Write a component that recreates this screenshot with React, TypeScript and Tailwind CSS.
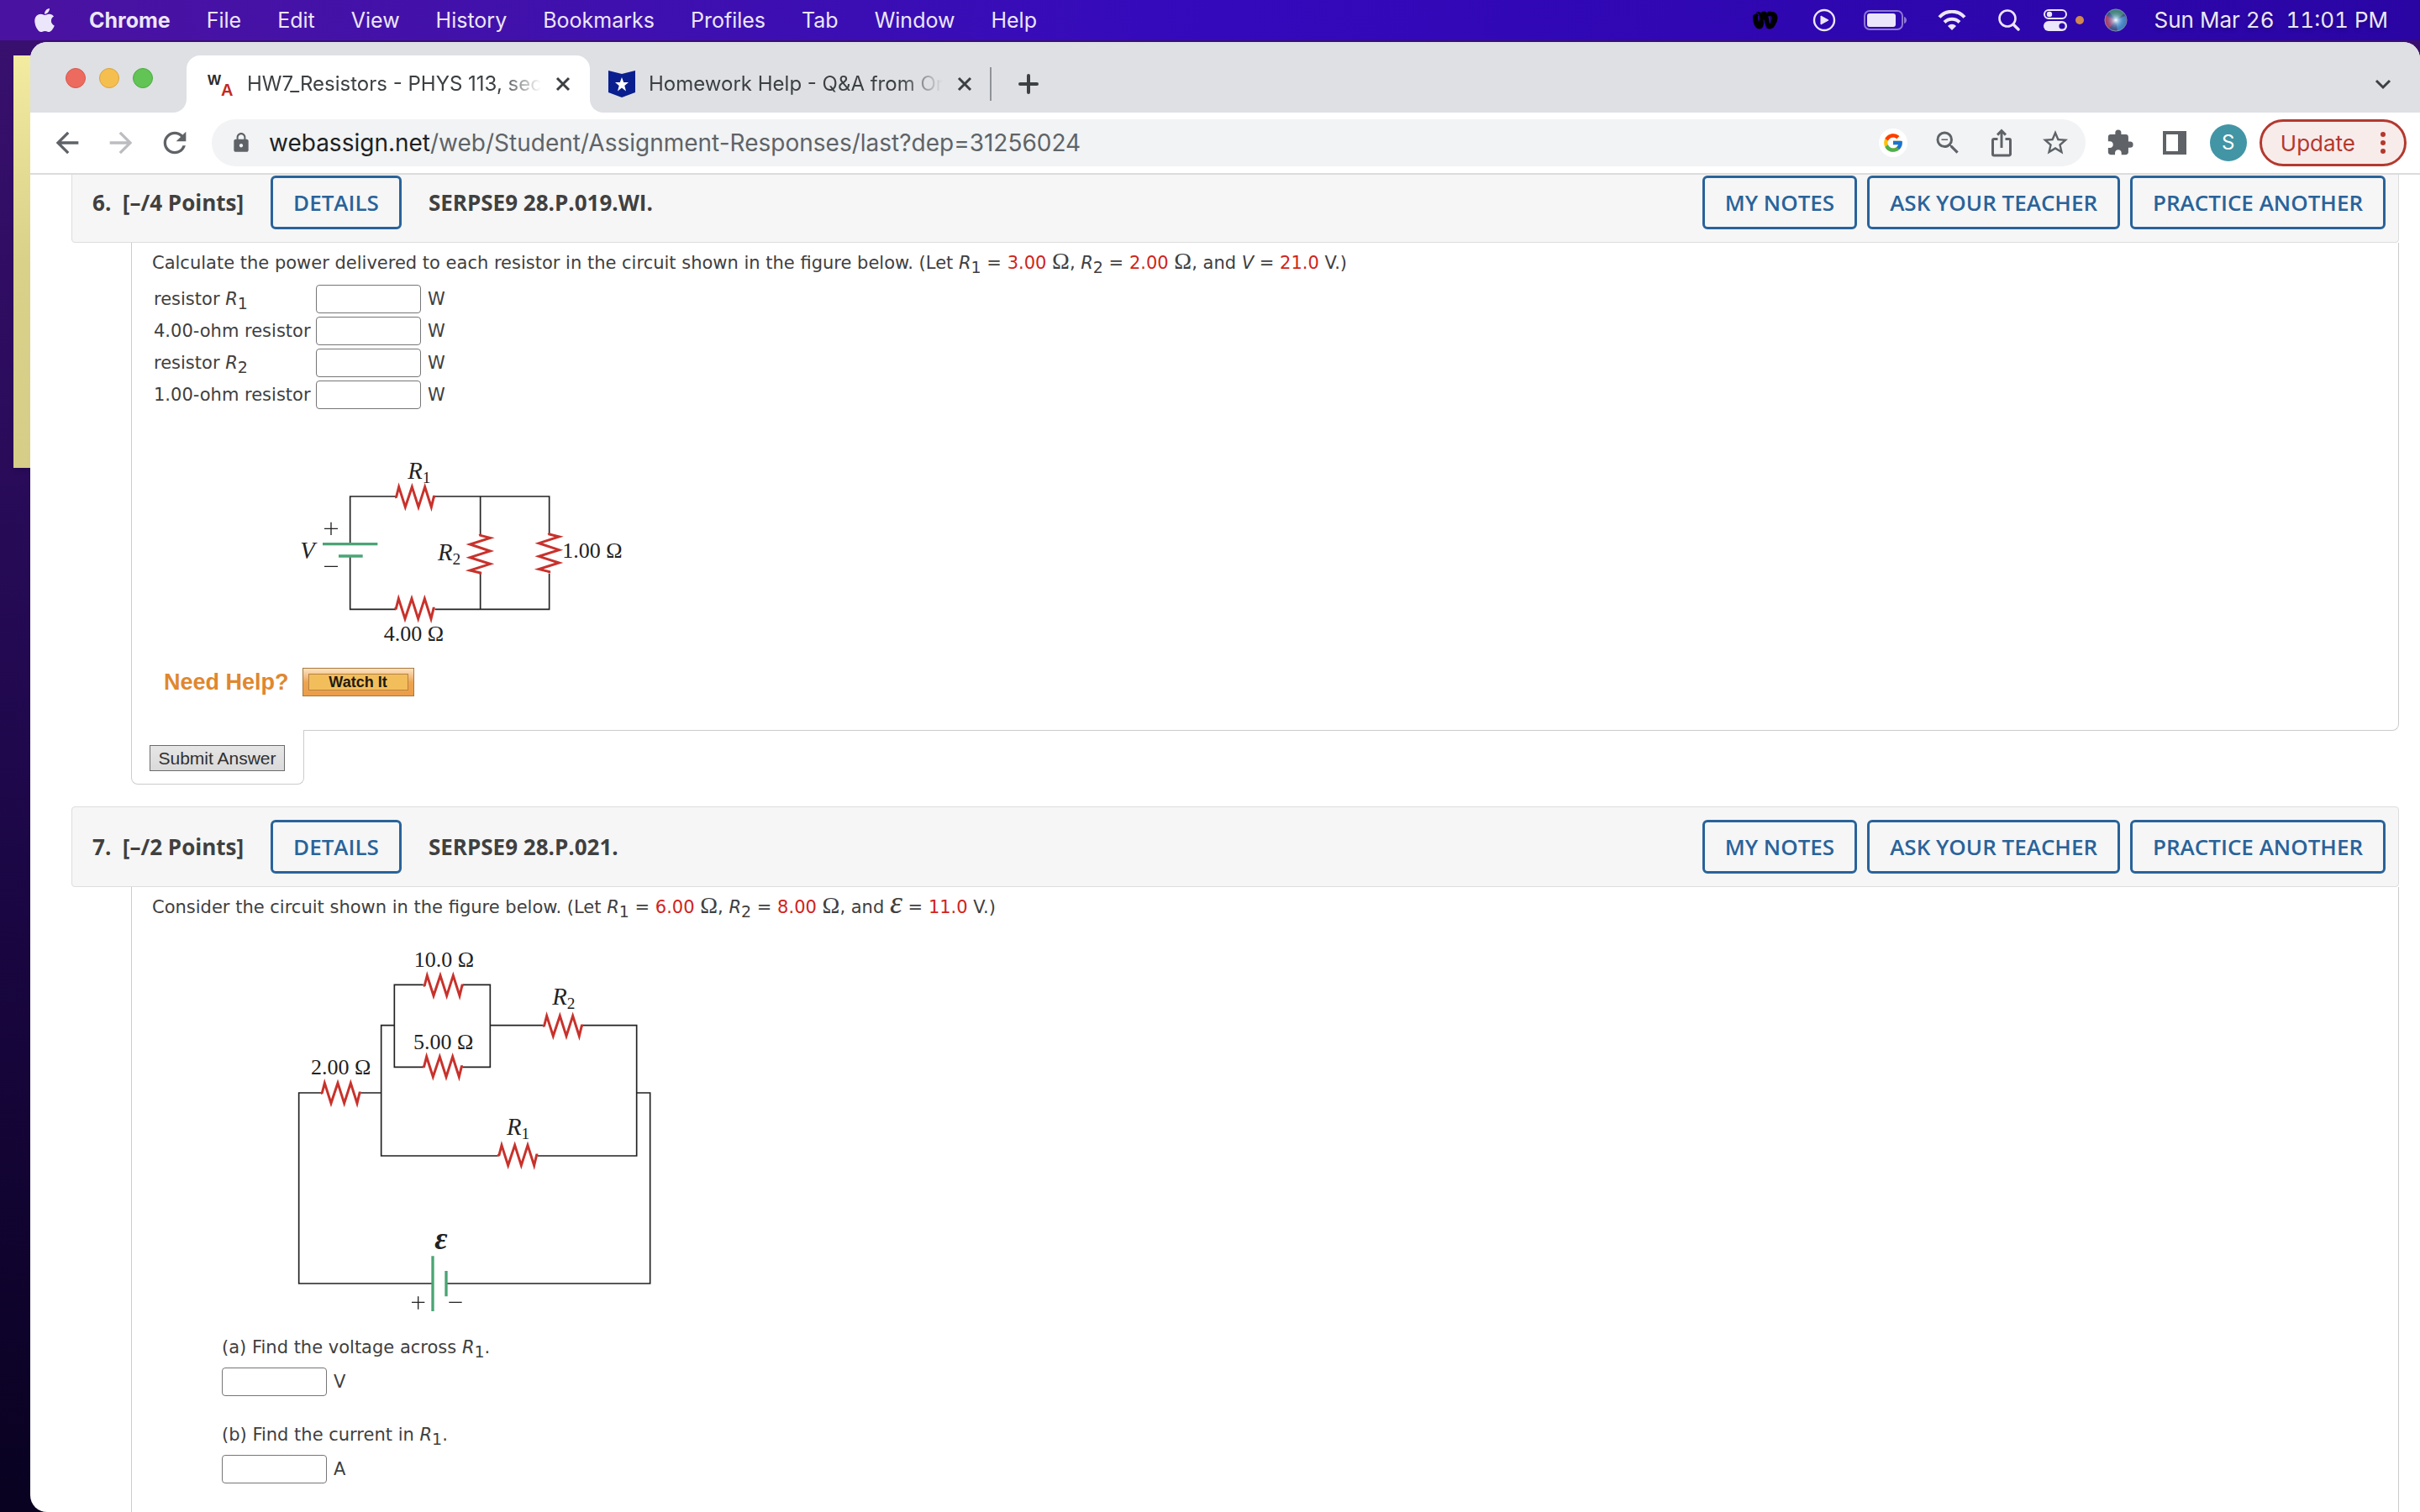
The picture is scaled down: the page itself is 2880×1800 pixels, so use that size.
import type { ReactNode } from "react";
import { FaApple } from "react-icons/fa";
import { FcGoogle } from "react-icons/fc";
import {
  MdArrowBack,
  MdArrowForward,
  MdExtension,
  MdIosShare,
  MdLock,
  MdOutlineZoomOut,
  MdRefresh,
  MdStarBorder,
} from "react-icons/md";

const MENUS = ["File", "Edit", "View", "History", "Bookmarks", "Profiles", "Tab", "Window", "Help"];

const ACTIONS = ["MY NOTES", "ASK YOUR TEACHER", "PRACTICE ANOTHER"];

const WIRE = "#222222";
const RESISTOR = "#c8322c";
const BATTERY = "#4aa574";

function MenuBar() {
  return (
    <header className="flex h-12 shrink-0 items-center bg-linear-to-r from-[#4a12a0] via-[#3409bc] to-[#2a05a4] pr-[38px] pl-[39px] text-[25px] leading-8 text-[#ece6fa] [text-shadow:0_2px_4px_rgba(0,0,0,0.3)]">
      <FaApple className="mr-[39px] h-8 w-7 shrink-0" />
      <nav className="flex items-center gap-[43px]">
        <button className="font-bold">Chrome</button>
        {MENUS.map((menu) => (
          <button key={menu}>{menu}</button>
        ))}
      </nav>
      <div className="ml-auto flex items-center">
        <svg className="mr-10 h-6 w-8" viewBox="0 0 32 24" fill="none" stroke="#000" strokeLinecap="round" strokeLinejoin="round">
          <path d="M4 8C4 14 6 19.500 9 19.500C13 19.500 9 5 14 4.500C18 4 16 19.500 21 19.500C27 19.500 27 5 21 4.500" strokeWidth="6" />
          <path d="M7 4.500C10 4.500 11 8 12 12M25 4.500C29 6 29 12 25 17" strokeWidth="5" />
          <path d="M3 4C7 1 9 6 9 12M14 12C15 16 15 18 17 20M20 8C22 6 24 8 23 11" stroke="#2e07b0" strokeWidth="1" />
        </svg>
        <svg className="mr-[33px] h-7 w-7" viewBox="0 0 28 28">
          <circle cx="14" cy="14" r="12" fill="none" stroke="currentColor" strokeWidth="2.4" />
          <path d="M10 9v10l9-5z" fill="currentColor" stroke="currentColor" strokeLinejoin="round" />
        </svg>
        <svg className="mr-9 h-6 w-[52px]" viewBox="0 0 52 24">
          <rect x="1" y="1" width="45" height="22" rx="6" fill="none" stroke="currentColor" strokeOpacity="0.5" strokeWidth="2" />
          <rect x="4" y="4" width="34" height="16" rx="3" fill="currentColor" />
          <path d="M48 8c4 1 4 7 0 8z" fill="currentColor" fillOpacity="0.5" />
        </svg>
        <svg className="mr-[38px] h-6 w-[34px]" viewBox="0 0 34 24" fill="none" stroke="currentColor" strokeWidth="4">
          <path d="M2 8.500C10 -0.500 24 -0.500 32 8.500" />
          <path d="M8 14.500C13 9.500 21 9.500 26 14.500" />
          <path d="M17 24l-5-5c3-3 7-3 10 0z" fill="currentColor" stroke="none" />
        </svg>
        <svg className="mr-7 h-[26px] w-[26px]" viewBox="0 0 26 26" fill="none" stroke="currentColor" strokeLinecap="round">
          <circle cx="11" cy="11" r="9.500" strokeWidth="2.600" />
          <path d="M18 18l6 6" strokeWidth="3.400" />
        </svg>
        <svg className="mr-[10px] h-[26px] w-7" viewBox="0 0 28 26">
          <rect x="1" y="1" width="26" height="10" rx="5" fill="none" stroke="currentColor" strokeWidth="2" />
          <circle cx="7" cy="6" r="3.200" fill="currentColor" />
          <rect y="14" width="28" height="12" rx="6" fill="currentColor" />
          <circle cx="22" cy="20" r="3.600" fill="#2c06ac" />
        </svg>
        <span className="mr-6 h-[10px] w-[10px] rounded-full bg-[#d08850]" />
        <svg className="mr-8 h-7 w-7" viewBox="0 0 28 28">
          <defs>
            <radialGradient id="siri" cx="0.5" cy="0.5" r="0.5">
              <stop offset="0" stopColor="#fff" />
              <stop offset="0.35" stopColor="#a9cdee" stopOpacity="0.6" />
              <stop offset="1" stopColor="#3a4a88" stopOpacity="0" />
            </radialGradient>
          </defs>
          <circle cx="14" cy="14" r="13.500" fill="#3d4f86" />
          <path d="M14 14L2 8A13 13 0 0 0 6 24z" fill="#b23c64" />
          <path d="M14 14L6 4A13 13 0 0 1 24 6z" fill="#3f8a72" />
          <path d="M14 14L25 9A13 13 0 0 1 16 27z" fill="#3b86c8" />
          <circle cx="14" cy="14" r="13.500" fill="url(#siri)" />
          <circle cx="14" cy="14" r="13" fill="none" stroke="#a8a4c8" strokeOpacity="0.6" />
        </svg>
        <span className="text-[26px] whitespace-pre tabular-nums">Sun Mar 26  11:01 PM</span>
      </div>
    </header>
  );
}

function CloseIcon() {
  return (
    <svg className="h-[18px] w-[18px]" viewBox="0 0 18 18" stroke="#3c4043" strokeWidth="3">
      <path d="M2 2l14 14M16 2L2 16" />
    </svg>
  );
}

function TabStrip() {
  return (
    <div className="flex h-[84px] shrink-0 items-end bg-[#dee0e4] pr-[34px]">
      <div className="mr-10 ml-[42px] flex h-[68px] items-center gap-4 pb-[14px]">
        <button aria-label="Close window" className="h-6 w-6 rounded-full border border-[#d9564b] bg-[#ed6a5f]" />
        <button aria-label="Minimize window" className="h-6 w-6 rounded-full border border-[#dba23c] bg-[#f5bf4f]" />
        <button aria-label="Zoom window" className="h-6 w-6 rounded-full border border-[#4dab40] bg-[#61c454]" />
      </div>
      <div className="relative flex h-[68px] w-[480px] items-center rounded-t-2xl bg-white pl-[26px]">
        <svg className="absolute bottom-0 -left-4 h-4 w-4" viewBox="0 0 16 16">
          <path d="M16 0v16H0C9 16 16 9 16 0z" fill="#fff" />
        </svg>
        <svg className="absolute -right-4 bottom-0 h-4 w-4" viewBox="0 0 16 16">
          <path d="M0 0v16h16C7 16 0 9 0 0z" fill="#fff" />
        </svg>
        <svg className="mr-[18px] h-7 w-7 overflow-visible" viewBox="0 0 28 28" fontFamily="Liberation Sans" fontWeight="bold">
          <text x="-1" y="15" fontSize="17" fill="#2b2b2b">W</text>
          <text x="15" y="28" fontSize="20" fill="#c22a22">A</text>
        </svg>
        <span className="w-[350px] overflow-hidden text-2xl whitespace-nowrap text-[#3c4043] [mask-image:linear-gradient(to_right,black_86%,transparent)]">
          HW7_Resistors - PHYS 113, section
        </span>
        <button aria-label="Close tab" className="ml-[17px]">
          <CloseIcon />
        </button>
      </div>
      <div className="flex h-[68px] w-[476px] items-center pl-[22px]">
        <svg className="mr-4 h-8 w-8" viewBox="0 0 32 32">
          <path d="M0 0l16 4L32 0v26l-16 6L0 26z" fill="#0a1f8f" />
          <path d="M16 8l2.200 6H24l-4.700 4 1.700 6.500-5-4-5 4 1.700-6.500L8 14h5.800z" fill="#fff" />
        </svg>
        <span className="w-[350px] overflow-hidden text-2xl whitespace-nowrap text-[#3c4043] [mask-image:linear-gradient(to_right,black_86%,transparent)]">
          Homework Help - Q&amp;A from Online
        </span>
        <button aria-label="Close tab" className="ml-[17px]">
          <CloseIcon />
        </button>
      </div>
      <div className="flex h-[68px] items-center gap-8">
        <span className="h-10 w-[2px] bg-[#8f9398]" />
        <button aria-label="New tab">
          <svg className="h-6 w-6" viewBox="0 0 24 24" stroke="#3c4043" strokeWidth="4" strokeLinecap="round">
            <path d="M12 2v20M2 12h20" />
          </svg>
        </button>
      </div>
      <div className="ml-auto flex h-[68px] items-center">
        <button aria-label="Search tabs">
          <svg className="h-5 w-5" viewBox="0 0 20 20" fill="none" stroke="#3c4043" strokeWidth="3">
            <path d="M2 6l8 8 8-8" />
          </svg>
        </button>
      </div>
    </div>
  );
}

function Toolbar() {
  return (
    <div className="flex h-[74px] shrink-0 items-center border-b-2 border-[#dcdcdc] bg-white pr-4 pl-6 text-[#5f6368]">
      <button aria-label="Back" className="mr-6">
        <MdArrowBack className="h-10 w-10" />
      </button>
      <button aria-label="Forward" className="mr-6 text-[#bbbdc0]">
        <MdArrowForward className="h-10 w-10" />
      </button>
      <button aria-label="Reload" className="mr-6">
        <MdRefresh className="h-10 w-10" />
      </button>
      <div className="mr-6 flex h-14 flex-1 items-center rounded-full bg-[#f1f3f4] pr-[18px] pl-[22px]">
        <MdLock className="mr-5 h-[26px] w-[26px]" />
        <span className="flex-1 text-[28px] leading-9">
          <span className="text-[#202124]">webassign.net</span>/web/Student/Assignment-Responses/last?dep=31256024
        </span>
        <button aria-label="Google" className="mr-[30px] rounded-full bg-white p-1">
          <FcGoogle className="h-[26px] w-[26px]" />
        </button>
        <button aria-label="Zoom out" className="mr-7">
          <MdOutlineZoomOut className="h-9 w-9" />
        </button>
        <button aria-label="Share" className="mr-7">
          <MdIosShare className="h-9 w-9" />
        </button>
        <button aria-label="Bookmark this tab">
          <MdStarBorder className="h-9 w-9" />
        </button>
      </div>
      <button aria-label="Extensions" className="mr-[34px]">
        <MdExtension className="h-[34px] w-[34px]" />
      </button>
      <button aria-label="Side panel" className="mr-7">
        <svg className="h-7 w-7" viewBox="0 0 28 28">
          <path d="M0 0h28v28H0zM4 4v20h14V4z" fill="currentColor" fillRule="evenodd" />
        </svg>
      </button>
      <button className="mr-[15px] h-11 w-11 rounded-full bg-[#4295a5] text-2xl text-white">S</button>
      <button className="flex h-14 items-center gap-[30px] rounded-full border-[3px] border-[#b3392f] bg-[#f8eceb] pr-[22px] pl-[22px] text-[26px] text-[#b5382c]">
        Update
        <svg className="h-7 w-[6px]" viewBox="0 0 6 28" fill="currentColor">
          <circle cx="3" cy="4" r="3" />
          <circle cx="3" cy="14" r="3" />
          <circle cx="3" cy="24" r="3" />
        </svg>
      </button>
    </div>
  );
}

function OutlineButton({ children }: { children: ReactNode }) {
  return (
    <button className="h-16 rounded-md border-[3px] border-[#29639a] px-6 font-semibold text-[#29639a]">
      {children}
    </button>
  );
}

function QuestionHeader({ number, points, code }: { number: number; points: string; code: string }) {
  return (
    <div className="flex h-24 items-center rounded-sm border border-[#dddddd] bg-[#f6f6f6] pr-[15px] pl-6 font-['Open_Sans',sans-serif] text-[26px] leading-9 text-[#404040]">
      <h2 className="mr-8 font-bold whitespace-pre">
        {number}.{"  "}[–/{points} Points]
      </h2>
      <OutlineButton>DETAILS</OutlineButton>
      <span className="ml-8 font-bold">{code}</span>
      <div className="ml-auto flex gap-3">
        {ACTIONS.map((action) => (
          <OutlineButton key={action}>{action}</OutlineButton>
        ))}
      </div>
    </div>
  );
}

function R({ n }: { n: number }) {
  return (
    <>
      <i>R</i>
      <sub className="text-[19px]">{n}</sub>
    </>
  );
}

function Red({ children }: { children: ReactNode }) {
  return <span className="text-[#d0241b]">{children}</span>;
}

function Ohm() {
  return <span className="font-['Liberation_Serif',serif] text-[28px] leading-[0px]">Ω</span>;
}

function AnswerInput({ id, label }: { id: string; label?: string }) {
  return (
    <input
      id={id}
      aria-label={label}
      type="text"
      className="block h-[34px] w-[125px] rounded border border-[#767676] bg-white px-1"
    />
  );
}

// Zigzag centred on (x, y); figures use a 3-units-per-pixel grid
function Zigzag({ x, y, vertical }: { x: number; y: number; vertical?: boolean }) {
  return (
    <path
      d="M-72 2L-67 0L-58 -35L-35 37L-11 -35L12 37L35 -35L58 37L67 0L72 0"
      transform={`translate(${x} ${y})${vertical ? " rotate(90)" : ""}`}
      fill="none"
      stroke={RESISTOR}
      strokeWidth="9"
    />
  );
}

function FigR({ x, y, n }: { x: number; y: number; n: number }) {
  return (
    <text x={x} y={y}>
      <tspan fontStyle="italic" fontSize="86">R</tspan>
      <tspan fontSize="58" dy="15">{n}</tspan>
    </text>
  );
}

function CircuitOne() {
  return (
    <svg
      role="img"
      aria-label="Circuit with a battery V and four resistors"
      className="h-60 w-[420px]"
      viewBox="0 0 1260 720"
      fontFamily="Liberation Serif, serif"
      fontSize="78"
      fill="#222"
    >
      <g fill="none" stroke={WIRE} strokeWidth="5">
        <path d="M392 180H230V350M533 180H941V312M941 455V583H533M392 583H230V395M695 180V315M695 457V583" />
        <path d="M138 295h48M162 272v46M138 430h48" strokeWidth="4" />
      </g>
      <path d="M132 350H328M189 393H275" stroke={BATTERY} strokeWidth="10" />
      <Zigzag x={462} y={181} />
      <Zigzag x={461} y={580} />
      <Zigzag x={695} y={386} vertical />
      <Zigzag x={941} y={382} vertical />
      <FigR x={436} y={118} n={1} />
      <FigR x={543} y={408} n={2} />
      <text x="52" y="403" fontStyle="italic" fontSize="86">V</text>
      <text x="988" y="399">1.00 Ω</text>
      <text x="350" y="697">4.00 Ω</text>
    </svg>
  );
}

function CircuitTwo() {
  return (
    <svg
      role="img"
      aria-label="Circuit with a battery and five resistors"
      className="h-[480px] w-[480px]"
      viewBox="0 0 1440 1440"
      fontFamily="Liberation Serif, serif"
      fontSize="78"
      fill="#222"
    >
      <g fill="none" stroke={WIRE} strokeWidth="5">
        <path d="M551 217H448V511H549M693 217H790V511H691M448 362H401V828H818M790 362H979M1121 362H1313V828H960" />
        <path d="M188 603H107V1284H583M328 603H401M1313 603H1361V1284H636" />
        <path d="M510 1351h46M533 1330v46M643 1351h46" strokeWidth="4" />
      </g>
      <path d="M585 1186V1383M633 1239V1330" stroke={BATTERY} strokeWidth="10" />
      <Zigzag x={623} y={219} />
      <Zigzag x={621} y={509} />
      <Zigzag x={257} y={603} />
      <Zigzag x={1050} y={363} />
      <Zigzag x={889} y={825} />
      <text x="518" y="154">10.0 Ω</text>
      <text x="516" y="446">5.00 Ω</text>
      <text x="150" y="538">2.00 Ω</text>
      <FigR x={1012} y={287} n={2} />
      <FigR x={849} y={753} n={1} />
      <text x="592" y="1161" fontStyle="italic" fontWeight="bold" fontSize="112">ε</text>
    </svg>
  );
}

const POWER_ROWS: { id: string; label: ReactNode }[] = [
  { id: "p1", label: <>resistor <R n={1} /></> },
  { id: "p2", label: "4.00-ohm resistor" },
  { id: "p3", label: <>resistor <R n={2} /></> },
  { id: "p4", label: "1.00-ohm resistor" },
];

function QuestionSix() {
  return (
    <section>
      <QuestionHeader number={6} points="4" code="SERPSE9 28.P.019.WI." />
      <div className="ml-[71px] rounded-br-lg border border-t-0 border-[#cccccc] pt-2 pb-10 pl-6">
        <p>
          Calculate the power delivered to each resistor in the circuit shown in the figure below. (Let <R n={1} /> ={" "}
          <Red>3.00</Red> <Ohm />, <R n={2} /> = <Red>2.00</Red> <Ohm />, and <i>V</i> = <Red>21.0</Red> V.)
        </p>
        <table className="mt-2">
          <tbody>
            {POWER_ROWS.map((row) => (
              <tr key={row.id} className="h-[38px]">
                <td className="w-[195px] p-0 pl-[2px] whitespace-nowrap">
                  <label htmlFor={row.id}>{row.label}</label>
                </td>
                <td className="p-0">
                  <AnswerInput id={row.id} />
                </td>
                <td className="p-0 pl-2">W</td>
              </tr>
            ))}
          </tbody>
        </table>
        <div className="mt-[42px] pl-[159px]">
          <CircuitOne />
        </div>
        <div className="mt-6 flex items-center gap-4 pl-[14px] font-['Liberation_Sans',sans-serif]">
          <span className="text-[27px] font-bold text-[#e0872e]">Need Help?</span>
          <button className="h-[34px] w-[133px] border border-[#a87838] bg-linear-to-b from-[#fbe3c4] via-[#eea550] to-[#eb9c48] p-[6px]">
            <span className="flex h-full items-center justify-center border border-[#b58440] bg-[#f2be5c] text-[18px] leading-none font-bold text-[#1f1a10]">
              Watch It
            </span>
          </button>
        </div>
      </div>
      <div className="relative -mt-px ml-[71px] flex h-[65px] w-[206px] rounded-b-lg border border-t-0 border-[#cccccc] bg-white pt-[18px] pl-[21px]">
        <button className="h-[31px] w-[161px] border border-[#6b6b6b] bg-linear-to-b from-[#e6e6e6] to-[#dadada] font-['Liberation_Sans',sans-serif] text-[21px] leading-none text-[#303030]">
          Submit Answer
        </button>
      </div>
    </section>
  );
}

function QuestionSeven() {
  return (
    <section className="mt-[26px] flex flex-1 flex-col">
      <QuestionHeader number={7} points="2" code="SERPSE9 28.P.021." />
      <div className="ml-[71px] flex-1 border-x border-[#cccccc] pt-2 pl-6">
        <p>
          Consider the circuit shown in the figure below. (Let <R n={1} /> = <Red>6.00</Red> <Ohm />, <R n={2} /> ={" "}
          <Red>8.00</Red> <Ohm />, and{" "}
          <span className="font-['Liberation_Serif',serif] text-[38px] leading-[0px] font-medium italic">ε</span> ={" "}
          <Red>11.0</Red> V.)
        </p>
        <div className="mt-1 pl-[139px]">
          <CircuitTwo />
        </div>
        <div className="mt-2 pl-[83px]">
          <p>
            (a) Find the voltage across <R n={1} />.
          </p>
          <label className="mt-2 flex items-center gap-2">
            <AnswerInput id="voltage" label="Voltage across R1" />V
          </label>
          <p className="mt-[30px]">
            (b) Find the current in <R n={1} />.
          </p>
          <label className="mt-2 flex items-center gap-2">
            <AnswerInput id="current" label="Current in R1" />A
          </label>
        </div>
      </div>
    </section>
  );
}

export default function App() {
  return (
    <div className="flex h-screen flex-col overflow-hidden bg-linear-to-b from-[#3a1070] via-[#1f084c] to-[#090220] font-['Inter',sans-serif]">
      <MenuBar />
      <div className="mt-[2px] flex min-h-0 flex-1">
        <aside className="w-9 shrink-0 pt-4 pl-4">
          <div className="h-[491px] bg-linear-to-b from-[#f3eba0] via-[#d9d08a] to-[#d6cd88] shadow-md" />
        </aside>
        <div className="flex min-w-0 flex-1 flex-col overflow-hidden rounded-t-[20px] rounded-bl-[20px] bg-white">
          <TabStrip />
          <Toolbar />
          <main className="flex min-h-0 flex-1 flex-col overflow-hidden pr-[25px] pl-[49px] font-['DejaVu_Sans',sans-serif] text-[21px] leading-8 text-[#404040]">
            <div className="-mt-[15px] flex flex-1 flex-col">
              <QuestionSix />
              <QuestionSeven />
            </div>
          </main>
        </div>
      </div>
    </div>
  );
}
